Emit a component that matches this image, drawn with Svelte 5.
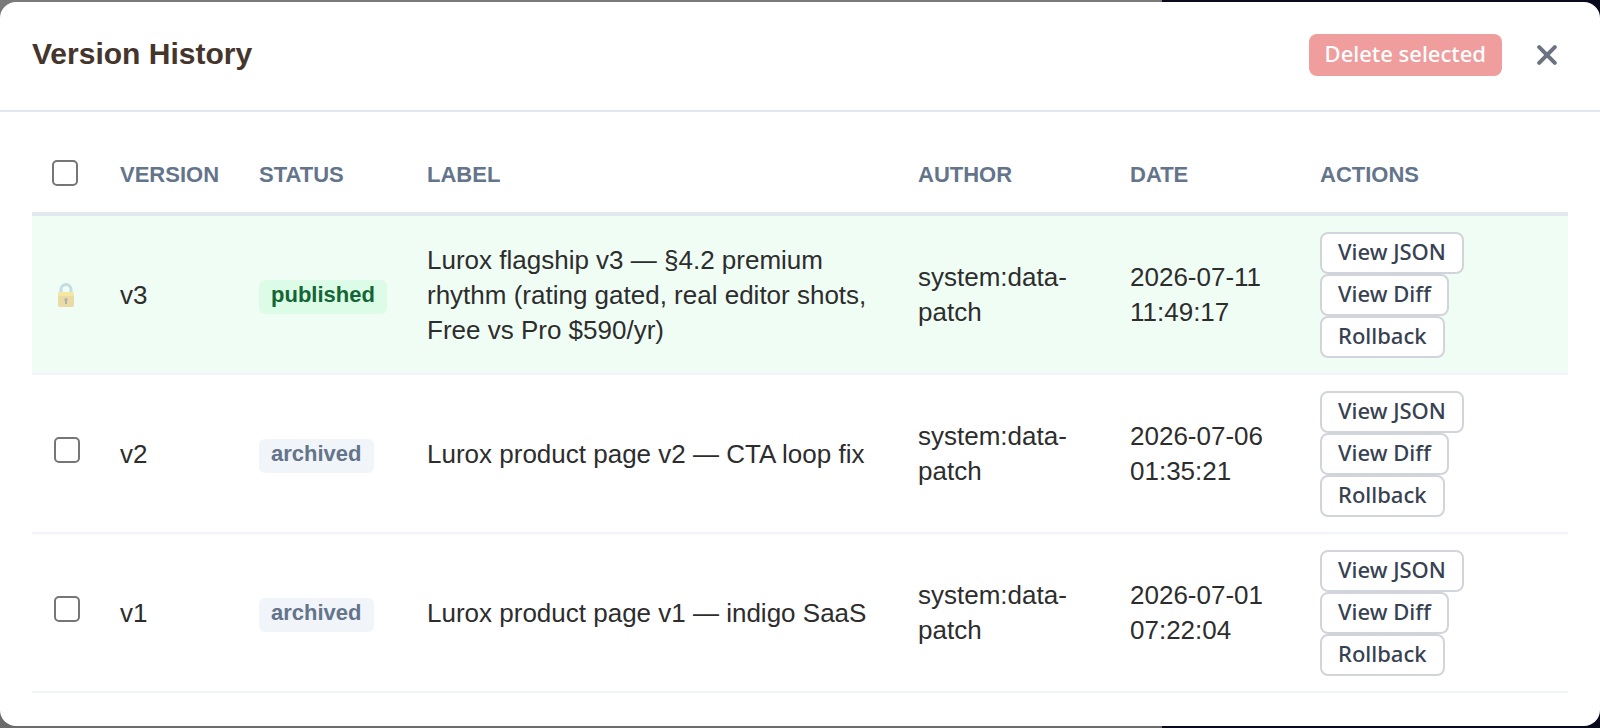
<script lang="ts">
  interface Version {
    id: number
    status: "published" | "archived"
    label: string
    author: string
    date: string
  }

  const versions: Version[] = [
    {
      id: 3,
      status: "published",
      label: "Lurox flagship v3 — §4.2 premium rhythm (rating gated, real editor shots, Free vs Pro $590/yr)",
      author: "system:data-patch",
      date: "2026-07-11 11:49:17",
    },
    {
      id: 2,
      status: "archived",
      label: "Lurox product page v2 — CTA loop fix",
      author: "system:data-patch",
      date: "2026-07-06 01:35:21",
    },
    {
      id: 1,
      status: "archived",
      label: "Lurox product page v1 — indigo SaaS",
      author: "system:data-patch",
      date: "2026-07-01 07:22:04",
    },
  ]

  const actions = ["View JSON", "View Diff", "Rollback"]
  const deletable = versions.filter((v) => v.status !== "published")

  let selected = $state<number[]>([])

  function toggleAll(e: Event) {
    const box = e.currentTarget as HTMLInputElement
    selected = box.checked ? deletable.map((v) => v.id) : []
  }
</script>

<div class="backdrop">
  <div class="modal" role="dialog" aria-labelledby="history-title">
    <header>
      <h2 id="history-title">Version History</h2>
      <button class="delete" disabled={selected.length === 0}>Delete selected</button>
      <button class="close" aria-label="Close">
        <svg viewBox="0 0 20 20" aria-hidden="true">
          <path d="M2.2 2.2 17.8 17.8M17.8 2.2 2.2 17.8" />
        </svg>
      </button>
    </header>

    <div class="body">
      <table>
        <colgroup>
          <col class="c-check" />
          <col class="c-version" />
          <col class="c-status" />
          <col />
          <col class="c-author" />
          <col class="c-date" />
          <col class="c-actions" />
        </colgroup>
        <thead>
          <tr>
            <th>
              <input
                type="checkbox"
                aria-label="Select all versions"
                checked={selected.length === deletable.length}
                onchange={toggleAll}
              />
            </th>
            <th>Version</th>
            <th>Status</th>
            <th>Label</th>
            <th>Author</th>
            <th>Date</th>
            <th>Actions</th>
          </tr>
        </thead>
        <tbody>
          {#each versions as v (v.id)}
            <tr class:current={v.status === "published"}>
              <td class="pick">
                {#if v.status === "published"}
                  <svg class="lock" viewBox="0 0 18 24" role="img" aria-label="Locked">
                    <path class="shackle" d="M4 11V6.5a5 5 0 0 1 10 0V11" />
                    <rect class="case" x="1" y="9" width="16" height="15" rx="2" />
                    <path class="shine" d="M1 13v-2a2 2 0 0 1 2-2h12a2 2 0 0 1 2 2v2z" />
                    <path class="keyhole" d="M9 15a1.7 1.7 0 0 1 1 3v3H8v-3a1.7 1.7 0 0 1 1-3z" />
                  </svg>
                {:else}
                  <input type="checkbox" aria-label="Select v{v.id}" value={v.id} bind:group={selected} />
                {/if}
              </td>
              <td>v{v.id}</td>
              <td><span class="badge {v.status}">{v.status}</span></td>
              <td>{v.label}</td>
              <td>{v.author}</td>
              <td>{v.date}</td>
              <td>
                <div class="actions">
                  {#each actions as action (action)}
                    <button>{action}</button>
                  {/each}
                </div>
              </td>
            </tr>
          {/each}
        </tbody>
      </table>
    </div>
  </div>
</div>

<style>
  :global(body) {
    margin: 0;
  }
  .backdrop {
    display: flex;
    min-height: 100vh;
    box-sizing: border-box;
    padding: 2px 0;
    background: linear-gradient(90deg, transparent 1162px, #090b1c 1162px),
      linear-gradient(#7a7a7a, #6b6b6b);
    font-family: "Liberation Sans", Arial, sans-serif;
  }
  .modal {
    flex: 1;
    background: #fff;
    border-radius: 16px;
    overflow: hidden;
  }
  header {
    display: flex;
    align-items: flex-start;
    padding: 32px 32px 34px;
    border-bottom: 2px solid #e2e8f0;
  }
  h2 {
    flex: 1;
    margin: 0;
    font-size: 30px;
    line-height: 40px;
    color: #44352d;
  }
  button {
    font-family: "Noto Sans", "Open Sans", sans-serif;
    font-size: 22px;
    font-weight: 500;
    line-height: 30px;
    cursor: pointer;
  }
  .delete {
    padding: 4px 16px 8px;
    border: 0;
    border-radius: 8px;
    background: #ef9d9d;
    color: #fff;
  }
  .delete:disabled {
    cursor: not-allowed;
  }
  .close {
    display: flex;
    margin-left: 24px;
    padding: 11px;
    border: 0;
    background: none;
  }
  .close svg {
    width: 20px;
    height: 20px;
    fill: none;
    stroke: #6b7280;
    stroke-width: 4;
    stroke-linecap: round;
  }
  .body {
    padding: 32px;
  }
  table {
    width: 100%;
    table-layout: fixed;
    border-spacing: 0;
    font-size: 26px;
    line-height: 35px;
    color: #2d2d2d;
  }
  .c-check {
    width: 68px;
  }
  .c-version {
    width: 139px;
  }
  .c-status {
    width: 168px;
  }
  .c-author {
    width: 212px;
  }
  .c-date {
    width: 190px;
  }
  .c-actions {
    width: 268px;
  }
  th {
    height: 36px;
    padding: 16px 20px;
    border-bottom: 4px solid #e2e8f0;
    font-size: 22px;
    line-height: 30px;
    text-align: left;
    text-transform: uppercase;
    vertical-align: top;
    color: #64748b;
  }
  td {
    padding: 16px 20px 15px;
    border-bottom: 2px solid #f1f5f9;
    vertical-align: middle;
  }
  .current td {
    background: #f0fdf4;
  }
  input {
    appearance: none;
    box-sizing: border-box;
    width: 26px;
    height: 26px;
    margin: 0;
    border: 2px solid #767676;
    border-radius: 5px;
    background: #fff;
  }
  input:checked {
    border-color: #2563eb;
    background: #2563eb;
  }
  th input {
    display: block;
  }
  .pick {
    text-align: right;
  }
  .lock {
    display: block;
    width: 18px;
    height: 24px;
    margin: 0 auto;
    opacity: 0.4;
  }
  .shackle {
    fill: none;
    stroke: #82aeca;
    stroke-width: 3;
  }
  .case {
    fill: #e0a92b;
  }
  .shine {
    fill: #fbc828;
  }
  .keyhole {
    fill: #4e433d;
  }
  .badge {
    display: inline-block;
    padding: 1px 12px 5px;
    border-radius: 6px;
    font-size: 22px;
    line-height: 28px;
    font-weight: 600;
  }
  .published {
    background: #dcfce7;
    color: #166534;
  }
  .archived {
    background: #f1f5f9;
    color: #64748b;
  }
  .actions {
    display: flex;
    flex-direction: column;
    align-items: flex-start;
  }
  .actions button {
    padding: 2px 16px 6px;
    border: 2px solid #d1d5db;
    border-radius: 8px;
    background: #fff;
    color: #374151;
  }
</style>
